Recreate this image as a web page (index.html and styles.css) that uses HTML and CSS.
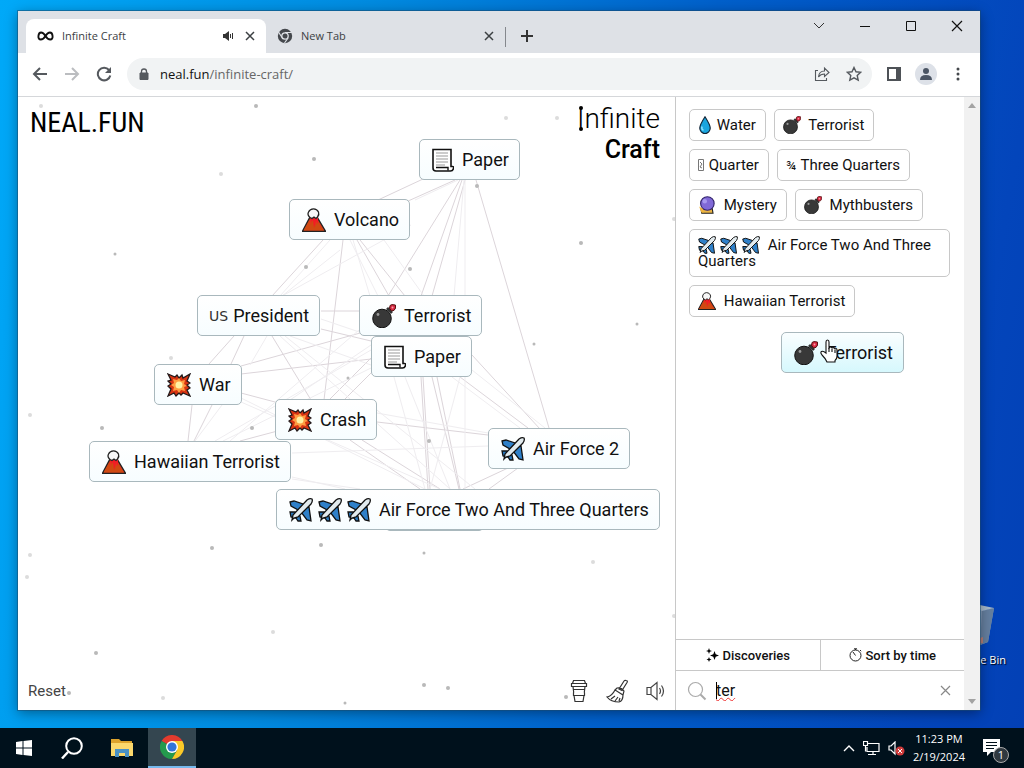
FILE: index.html
```html
<!DOCTYPE html>
<html lang="en">
<head>
<meta charset="utf-8">
<title>Infinite Craft</title>
<link rel="stylesheet" href="styles.css">
</head>
<body>
<svg class="defs" aria-hidden="true">
  <defs>
    <symbol id="paper" viewBox="0 0 22 24"><path d="M1 1.500h18v17h1.500q1.500 0 1 2-.6 2.500-3 2.500H4q-3 0-3-3z" fill="#fff" stroke="#111" stroke-width="1.600"/><path d="M4 5h12M4 8h12M4 11h12M4 14h12M4 17h9" stroke="#999"/><path d="M4 19.500h12v3" fill="none" stroke="#111" stroke-width="1.400"/></symbol>
    <symbol id="volcano" viewBox="0 0 24 24"><path d="M8 9h7l8.500 14.200H.5z" fill="#e0391b" stroke="#222" stroke-width="1.400"/><path d="M1.500 22.500L7 13l2 4 2-6 2 8 3-6 2 5 4 4.500z" fill="#d04a12"/><path d="M8 9l1 5 2-2 1 8 2-7 2 3V9z" fill="#f31b25"/><path d="M8 9.500Q5 7 6.500 4 8 .8 11.500.8T16.500 4Q17.500 6.500 15.500 9L14 10.500 12 9l-2 1.500z" fill="#f7f7f7" stroke="#222" stroke-width="1.300"/></symbol>
    <symbol id="bomb" viewBox="0 0 24 24"><path d="M16 7l3-3 3-2" fill="none" stroke="#222" stroke-width="3"/><circle cx="10" cy="14.500" r="9.300" fill="#383838" stroke="#111"/><path d="M14 5l5 5 2-2-5-5z" fill="#333"/><path d="M18 1.500l2-.9 3.400.4.2 3-1.600 2.400-2.500.5-1.800-2.400z" fill="#d92843" stroke="#511" stroke-width="1"/><circle cx="20.500" cy="3.500" r="1" fill="#f8a0a8"/><circle cx="6" cy="10.500" r="1.400" fill="#999"/></symbol>
    <symbol id="boom" viewBox="0 0 24 24"><path d="M1 1l7 3 2-2 2 3 3-3 1 3 7-4-3 7 3 2-3 2 3 3-3 2 3 6-7-3-2 2-2-2-3 3-2-3-6 3 3-7-3-3 3-2-3-3 3-1z" fill="#d93412" stroke="#21191a" stroke-width="1.300"/><path d="M6 6l4 1 2-2 2 3 4-1-1 4 3 2-3 1 1 4-4-1-2 3-2-3-4 1 1-4-3-2 3-2z" fill="#ff9e42"/><circle cx="12" cy="12" r="3.500" fill="#fff2a4"/></symbol>
    <symbol id="plane" viewBox="0 0 24 24"><path d="M1 4l4-1 9 3 1 4-4 3L2 8z" fill="#2f80c9" stroke="#111" stroke-width="1.300"/><path d="M15 10l5-1 2 14-4-1-6-8z" fill="#2f80c9" stroke="#111" stroke-width="1.300"/><path d="M1 14l5 0 5 4 1 5-3 0-2-3-5-1z" fill="#2979bf" stroke="#111" stroke-width="1.300"/><path d="M5 20L3 22l1-5L18 2q3-2 5-1 1 2-1 5L9 19z" fill="#e2ebef" stroke="#111" stroke-width="1.300"/></symbol>
    <symbol id="drop" viewBox="0 0 16 24"><path d="M8 1q7 11 7 15a7 7.500 0 0 1-14 0Q1 12 8 1z" fill="#19a5df" stroke="#123" stroke-width="1.500"/><path d="M4 14q-1 4 2 5" stroke="#8de2ff" fill="none" stroke-width="2"/></symbol>
    <symbol id="orb" viewBox="0 0 24 24"><path d="M4 17h15l1 6H5z" fill="#eab545" stroke="#222" stroke-width="1.500"/><circle cx="12.500" cy="10" r="9" fill="#8069d6" stroke="#30226b" stroke-width="1.500"/><path d="M1.500 14l5 3 1 5-3 0z" fill="#f2b53c"/><circle cx="9" cy="7" r="3" fill="#a798ee"/></symbol>
    <symbol id="tofu" viewBox="0 0 6 12"><path d="M.5.500h5v11h-5zM2 3l2 2-2 3 2 1" fill="none" stroke="#777"/></symbol>
    <symbol id="x" viewBox="0 0 10 10"><path d="M1 1l8 8M9 1L1 9" fill="none" stroke="currentColor" stroke-width="1.500"/></symbol>
  </defs>
</svg>

<div class="desktop">
  <div class="bin">
    <svg width="46" height="44" viewBox="0 0 46 44"><path d="M4 1l28 6 12-3-6 34-13 5L6 38z" fill="#8299b7"/><path d="M32 7l12-3-6 34-8 3z" fill="#657f9f"/><path d="M4 1l28 6 12-3L25 0z" fill="#a9bac9"/><path d="M27 35l6-2v6l-6 1z" fill="#b57e75"/></svg>
    <span>Recycle Bin</span>
  </div>

  <main class="window">
    <header class="tabs">
      <div class="tab active">
        <svg class="loop" width="17" height="12" viewBox="0 0 18 12"><path d="M9 6C6 1 2 1 1.500 6S6 11 9 6s7-5 7.500 0S12 11 9 6z" fill="none" stroke="#111" stroke-width="2"/></svg>
        <span class="tab-title">Infinite Craft</span>
        <svg width="12" height="12" viewBox="0 0 12 12"><path d="M1 4h2l4-3v10L3 8H1z" fill="#333"/><path d="M8.500 4v4M10.500 3v6" stroke="#333"/></svg>
        <button class="icon-button" aria-label="Close Infinite Craft"><svg width="10" height="10"><use href="#x"/></svg></button>
      </div>
      <div class="tab">
        <svg width="16" height="16" viewBox="0 0 16 16"><circle cx="8" cy="8" r="7.200" fill="#45484d"/><circle cx="8" cy="8" r="3.200" fill="#45484d" stroke="#dee1e6" stroke-width="1.300"/><path d="M8 4.500h7M5 9.500L1.500 4M11 10l-3.500 5" stroke="#dee1e6" stroke-width="1.200"/></svg>
        <span class="tab-title">New Tab</span>
        <button class="icon-button" aria-label="Close New Tab"><svg width="10" height="10"><use href="#x"/></svg></button>
      </div>
      <button class="icon-button new-tab" aria-label="New tab"><svg width="12" height="12" viewBox="0 0 12 12"><path d="M6 0v12M0 6h12" stroke="#333" stroke-width="2"/></svg></button>
      <div class="controls">
        <button class="icon-button" aria-label="Search tabs"><svg width="12" height="12" viewBox="0 0 12 12"><path d="M1 3l5 5 5-5" fill="none" stroke="#333"/></svg></button>
        <button class="icon-button" aria-label="Minimize"><svg width="12" height="12" viewBox="0 0 12 12"><path d="M1 6.500h10" stroke="#111"/></svg></button>
        <button class="icon-button" aria-label="Maximize"><svg width="12" height="12" viewBox="0 0 12 12"><path d="M1.500 1.500h9v9h-9z" fill="none" stroke="#111"/></svg></button>
        <button class="icon-button" aria-label="Close"><svg width="12" height="12" viewBox="0 0 12 12"><path d="M1 1l10 10M11 1L1 11" stroke="#111" stroke-width="1.200"/></svg></button>
      </div>
    </header>

    <nav class="toolbar">
      <button class="icon-button" aria-label="Back"><svg width="16" height="16" viewBox="0 0 16 16"><path d="M15 8H2M8 2L2 8l6 6" fill="none" stroke="#55595e" stroke-width="2"/></svg></button>
      <button class="icon-button" aria-label="Forward"><svg width="16" height="16" viewBox="0 0 16 16"><path d="M1 8h13M8 2l6 6-6 6" fill="none" stroke="#bbbdc0" stroke-width="2"/></svg></button>
      <button class="icon-button" aria-label="Reload"><svg width="16" height="16" viewBox="0 0 16 16"><path d="M13 4a6.300 6.300 0 1 0 1.300 5.500" fill="none" stroke="#55595e" stroke-width="2"/><path d="M15 1v6H9z" fill="#55595e"/></svg></button>
      <div class="address">
        <svg width="10" height="12" viewBox="0 0 10 12"><path d="M1 5h8v6.500H1z" fill="#55595e" stroke="#55595e"/><path d="M2.500 5V3.500a2.500 2.500 0 0 1 5 0V5" fill="none" stroke="#55595e" stroke-width="1.300"/></svg>
        <span class="url">neal.fun<em>/infinite-craft/</em></span>
        <button class="icon-button" aria-label="Share"><svg width="16" height="16" viewBox="0 0 16 16"><path d="M4 4.500H1.500v10h11V12M4.500 11q.5-6 6-6V2l4.500 4.500-4.500 4V8Q6.500 8 4.500 11z" fill="none" stroke="#55595e" stroke-width="1.100"/></svg></button>
        <button class="icon-button" aria-label="Bookmark"><svg width="16" height="16" viewBox="0 0 16 16"><path d="M8 1.500l2 4.300 4.700.5-3.500 3.200 1 4.700L8 11.800l-4.200 2.400 1-4.700L1.300 6.300 6 5.800z" fill="none" stroke="#55595e" stroke-width="1.400"/></svg></button>
      </div>
      <button class="icon-button" aria-label="Side panel"><svg width="14" height="14" viewBox="0 0 14 14"><path d="M1 1h12v12H1z" fill="none" stroke="#4e5257" stroke-width="2"/><path d="M9 1h4v12H9z" fill="#4e5257"/></svg></button>
      <button class="icon-button profile" aria-label="Profile"><svg width="12" height="12" viewBox="0 0 12 12"><circle cx="6" cy="3" r="3" fill="#4b5564"/><path d="M0 12q0-5 6-5t6 5z" fill="#4b5564"/></svg></button>
      <button class="icon-button" aria-label="Menu"><svg width="4" height="14" viewBox="0 0 4 14" fill="#44484c"><circle cx="2" cy="2" r="1.500"/><circle cx="2" cy="7" r="1.500"/><circle cx="2" cy="12" r="1.500"/></svg></button>
    </nav>

    <section class="page">
      <div class="canvas">
        <svg class="links" aria-hidden="true"><g transform="translate(-18 -97)">
          <g stroke="#dcd5da" fill="none">
            <path d="M423 179L378 200M455 180L388 210M462 180L421 296M465 180L432 296M460 180L388 296M476 180L549 428"/>
            <path d="M323 240L272 296M357 240L389 296M360 240L405 296M343 240L324 400M321 311H359M321 329L371 341M234 336L209 364M244 336L231 364M272 336L311 400M241 366L371 330M241 374L371 359M241 393L275 402M192 405L188 441M212 405L194 441M240 441L300 425"/>
            <path d="M371 358L330 399M371 373L345 399M421 377L428 489M423 377L430 489M432 377L459 489M437 377L460 489M472 355L540 429M460 377L528 428M377 422L488 435M350 440L420 489M362 440L440 489M508 468L463 489M518 468L489 489"/>
          </g>
          <g stroke="#efedf0" fill="none">
            <path d="M464 180L454 296M465 180V296M458 180L415 200M330 240L280 296M353 240L370 296M350 240L378 296M340 250L282 296M411 225L282 296M384 240L424 296"/>
            <path d="M280 336L450 489M285 336L475 489M267 336L250 365M290 336L371 365M321 319L371 336M241 402L440 489M239 397L425 489M222 405L195 441M215 441L371 350M223 441L371 368M292 453L488 446M292 477L345 489M292 479L360 489M394 377L425 489M405 377L450 489M465 377V489M460 377L430 489M472 370L545 428M452 377L520 428M377 413L488 433M371 345L290 400M359 330L230 441"/>
          </g>
          <g fill="#b9b9b9">
            <circle cx="256" cy="106" r="2"/><circle cx="314" cy="159" r="2"/><circle cx="115" cy="254" r="1.500"/><circle cx="306" cy="267" r="2"/><circle cx="410" cy="269" r="2"/><circle cx="477" cy="186" r="2"/><circle cx="581" cy="243" r="2"/><circle cx="637" cy="324" r="1.500"/><circle cx="534" cy="344" r="1.500"/><circle cx="348" cy="378" r="1.500"/><circle cx="102" cy="428" r="2"/><circle cx="252" cy="428" r="2"/><circle cx="429" cy="441" r="2"/><circle cx="424" cy="553" r="1.500"/><circle cx="321" cy="545" r="2"/><circle cx="212" cy="548" r="2"/><circle cx="96" cy="653" r="2"/><circle cx="69" cy="693" r="2"/><circle cx="424" cy="685" r="2"/><circle cx="448" cy="688" r="2"/><circle cx="345" cy="703" r="1.500"/><circle cx="566" cy="697" r="2"/>
          </g>
          <g fill="#dcdcdc">
            <circle cx="41" cy="106" r="2"/><circle cx="221" cy="174" r="2"/><circle cx="506" cy="118" r="2"/><circle cx="557" cy="118" r="2"/><circle cx="171" cy="358" r="2"/><circle cx="30" cy="415" r="2"/><circle cx="30" cy="555" r="2"/><circle cx="27" cy="577" r="2"/><circle cx="273" cy="632" r="2"/><circle cx="163" cy="698" r="2"/><circle cx="593" cy="562" r="2"/><circle cx="674" cy="219" r="2"/><circle cx="674" cy="616" r="2"/>
          </g>
        </g></svg>

        <div class="brand">
          <a class="logo" href="#">NEAL.FUN</a>
          <h1 class="game"><span class="thin"><span class="tall">I</span>nfinite</span><span class="bold">Craft</span></h1>
        </div>

        <div class="node n-paper"><svg class="sheet"><use href="#paper"/></svg>Paper</div>
        <div class="node n-volcano"><svg><use href="#volcano"/></svg>Volcano</div>
        <div class="node n-president"><span class="flag">US</span>President</div>
        <div class="node n-terrorist"><svg><use href="#bomb"/></svg>Terrorist</div>
        <div class="node n-paper2"><svg class="sheet"><use href="#paper"/></svg>Paper</div>
        <div class="node n-war"><svg><use href="#boom"/></svg>War</div>
        <div class="node n-hawaiian"><svg><use href="#volcano"/></svg>Hawaiian Terrorist</div>
        <div class="node n-crash"><svg><use href="#boom"/></svg>Crash</div>
        <div class="node n-airforce"><svg><use href="#plane"/></svg>Air Force 2</div>
        <div class="node n-under"></div>
        <div class="node n-quarters"><span class="trio"><svg><use href="#plane"/></svg><svg><use href="#plane"/></svg><svg><use href="#plane"/></svg></span>Air Force Two And Three Quarters</div>

        <footer class="tools">
          <button class="reset">Reset</button>
          <button class="icon-button" aria-label="Buy a coffee"><svg width="18" height="24" viewBox="0 0 18 24"><path d="M3.500 1.500h11l1 3h-13zM1.500 4.500h15v3h-15zM3 7.500l.7 6M15 7.500l-.7 6M3 10.500h12M3.500 16.500h11M4 16.500l1 6h8l1-6M3.500 13.500v3h11v-3" fill="none" stroke="#333" stroke-width="1.200"/></svg></button>
          <button class="icon-button" aria-label="Clear"><svg width="22" height="24" viewBox="0 0 22 24"><path d="M20 1.500q2 0 1 2l-5 8-3-1.500 5-8q.8-1 2-.5zM11 9q4-1 7 3l-1 4-8-5zM9 11Q6 17 1 18q4 5 12 5 4-1 4-7M5 20l4-3M9 22l3-4M13 22l1-3" fill="none" stroke="#333" stroke-width="1.200"/></svg></button>
          <button class="icon-button" aria-label="Sound"><svg width="20" height="20" viewBox="0 0 20 20"><path d="M1 6.500h4l6-5v17l-6-5H1zM5 6.500v7M13.500 7q2 3 0 6M15.500 4.500q4 5.500 0 11" fill="none" stroke="#444" stroke-width="1.200"/></svg></button>
        </footer>
      </div>

      <aside class="sidebar">
        <div class="items">
          <button class="item"><svg class="slim"><use href="#drop"/></svg> Water</button>
          <button class="item"><svg><use href="#bomb"/></svg> Terrorist</button>
          <button class="item"><svg class="tofu"><use href="#tofu"/></svg> Quarter</button>
          <button class="item"><span class="fraction">¾</span> Three Quarters</button>
          <button class="item"><svg><use href="#orb"/></svg> Mystery</button>
          <button class="item"><svg><use href="#bomb"/></svg> Mythbusters</button>
          <button class="item"><svg><use href="#plane"/></svg><svg><use href="#plane"/></svg><svg><use href="#plane"/></svg> Air Force Two And Three Quarters</button>
          <button class="item"><svg><use href="#volcano"/></svg> Hawaiian Terrorist</button>
        </div>
        <div class="sort">
          <button><svg width="13" height="14" viewBox="0 0 13 14"><path d="M8.500 3l1.200 3.300L13 7.500 9.700 8.700 8.500 12 7.300 8.700 4 7.500l3.300-1.200zM3 0l.8 2.200L6 3l-2.200.8L3 6l-.8-2.200L0 3l2.200-.8zM3 9l.7 1.800L5.500 11.500l-1.800.7L3 14l-.7-1.800L.5 11.500l1.800-.7z"/></svg>Discoveries</button>
          <button><svg width="13" height="14" viewBox="0 0 13 14"><circle cx="6.500" cy="7.500" r="5.500" fill="none" stroke="#222"/><path d="M6.500 7.500L4 4M5 .8h3M6.500 1v1M11 2l1.200 1.200" stroke="#222" fill="none"/></svg>Sort by time</button>
        </div>
        <div class="search">
          <svg width="20" height="20" viewBox="0 0 20 20"><circle cx="8.500" cy="8.500" r="7" fill="none" stroke="#aaa" stroke-width="1.200"/><path d="M13.500 13.500l5 5" stroke="#aaa" stroke-width="2"/></svg>
          <div class="field"><input type="text" aria-label="Search items" value="ter"></div>
          <button class="icon-button" aria-label="Clear search"><svg width="11" height="11" viewBox="0 0 11 11"><path d="M1 1l9 9M10 1l-9 9" stroke="#888" stroke-width="1.200"/></svg></button>
        </div>
      </aside>
      <div class="scroll">
        <svg width="8" height="5" viewBox="0 0 8 5"><path d="M4 0l4 5H0z" fill="#a3a3a3"/></svg>
        <svg width="8" height="5" viewBox="0 0 8 5"><path d="M0 0h8L4 5z" fill="#a3a3a3"/></svg>
      </div>

      <div class="node dragged"><svg><use href="#bomb"/></svg>Terrorist
        <svg class="pointer" viewBox="0 0 18 24"><path d="M6 14V3q0-2 1.500-2T9 3v6q2-2 3 0 2-1 3 1 2-1 2 1v6q0 3-2 4.500V23H7q-1-3-5-7-2-2.500-.5-3.500T6 14z" fill="#fff" stroke="#111" stroke-width="1.100"/><path d="M9 9v4M12 10v3M15 11v3" stroke="#111" stroke-width="1.100"/></svg>
      </div>
    </section>
  </main>

  <footer class="taskbar">
    <button class="task" aria-label="Start"><svg width="16" height="16" viewBox="0 0 16 16"><path d="M0 2l6.500-1v6.500H0zM7.500 1L16 0v7.500H7.500zM0 8.500h6.500V15L0 14zM7.500 8.500H16V16l-8.500-1z" fill="#fff"/></svg></button>
    <button class="task" aria-label="Search"><svg width="22" height="22" viewBox="0 0 22 22"><circle cx="13" cy="9" r="7.800" fill="none" stroke="#fff" stroke-width="2"/><path d="M7 15l-6 6.500" stroke="#fff" stroke-width="2.400"/></svg></button>
    <button class="task" aria-label="File Explorer"><svg width="22" height="18" viewBox="0 0 22 18"><path d="M0 0h8l2 2h11v15H0z" fill="#dda32c"/><path d="M0 4h22v13H0z" fill="#fbd86c"/><path d="M4 10h14v8h-4v-4H8v4H4z" fill="#4a91c4"/></svg></button>
    <button class="task current" aria-label="Chrome"><svg width="24" height="24" viewBox="0 0 24 24"><path d="M12 12L1.600 6a12 12 0 0 1 20.800 0z" fill="#e33b2e"/><path d="M12 12L1.600 6A12 12 0 0 0 12 24l5-9z" fill="#249a4d"/><path d="M12 6h10.400A12 12 0 0 1 12 24l5.200-9z" fill="#fbc928"/><circle cx="12" cy="12" r="6" fill="#fff"/><circle cx="12" cy="12" r="4.600" fill="#3275d8"/></svg></button>
    <div class="tray">
      <svg width="12" height="8" viewBox="0 0 12 8"><path d="M1 7l5-5 5 5" fill="none" stroke="#fff" stroke-width="1.400"/></svg>
      <svg width="17" height="15" viewBox="0 0 17 15"><path d="M5 2.500h11v8H4V6M10 10.500v3M5 13.500h8M.5.500h4v4h-4zM2.500 4.500v6" fill="none" stroke="#fff" stroke-width="1.200"/></svg>
      <svg width="17" height="15" viewBox="0 0 17 15"><path d="M1 5h2l4-4v12L3 9H1z" fill="none" stroke="#fff" stroke-width="1.200"/><circle cx="12" cy="10" r="4.500" fill="#cf3b3b"/><path d="M10 8l4 4M14 8l-4 4" stroke="#fff"/></svg>
      <div class="clock"><span>11:23 PM</span><span>2/19/2024</span></div>
      <button class="icon-button notices" aria-label="Notifications"><svg width="17" height="18" viewBox="0 0 17 18"><path d="M0 0h17v13H8l-4 4v-4H0z" fill="#fff"/><path d="M3 3.500h11M3 6.500h11M3 9.500h8" stroke="#00101a"/></svg><span class="badge">1</span></button>
    </div>
  </footer>
</div>
</body>
</html>
```
FILE: styles.css
```css
* { box-sizing: border-box; }
html, body { height: 100%; margin: 0; }
body { font-family: Roboto, "Liberation Sans", sans-serif; color: #111; overflow: hidden; }
button, input { font: inherit; color: inherit; }
button { border: 0; background: none; padding: 0; }
svg { display: block; flex: none; }
.defs { position: absolute; width: 0; height: 0; }
.icon-button { display: flex; align-items: center; justify-content: center; flex: none; }

.desktop {
  position: relative;
  display: flex;
  flex-direction: column;
  height: 100vh;
  background: linear-gradient(100deg, #00a9f8 0%, #008be0 32%, #0060cb 62%, #0345bb 90%, #0340b5 100%);
}
.bin {
  position: absolute;
  right: 14px;
  bottom: 100px;
  display: flex;
  flex-direction: column;
  align-items: flex-end;
  gap: 4px;
  padding-right: 4px;
  font: 11px/16px "Open Sans", sans-serif;
  color: #fff;
  text-shadow: 1px 1px 1px #000;
}
.bin svg { margin-right: 10px; }

.window {
  position: relative;
  flex: 1;
  min-height: 0;
  display: flex;
  flex-direction: column;
  margin: 11px 44px 18px 18px;
  background: #fff;
  box-shadow: 0 0 0 1px #1c4a6b80, 0 3px 12px #0006;
}
.tabs {
  display: flex;
  align-items: stretch;
  height: 42px;
  padding: 8px 0 0 8px;
  background: #dee1e6;
  font: 11px/16px "Open Sans", sans-serif;
  color: #3c4043;
}
.tab {
  display: flex;
  align-items: center;
  gap: 8px;
  width: 239px;
  padding: 0 11px;
}
.tab.active { width: 240px; background: #fff; border-radius: 8px 8px 0 0; }
.tab-title { flex: 1; }
.tab .icon-button { width: 10px; margin-left: 3px; }
.new-tab { width: 44px; position: relative; }
.new-tab::before { content: ""; position: absolute; left: 0; top: 8px; height: 20px; border-left: 1px solid #85888d; }
.controls { display: flex; align-items: flex-start; margin-left: auto; }
.controls .icon-button { width: 46px; height: 13px; }

.toolbar {
  display: flex;
  align-items: center;
  gap: 16px;
  height: 44px;
  padding: 0 20px 2px 14px;
  border-bottom: 1px solid #d5d7da;
}
.address {
  flex: 1;
  display: flex;
  align-items: center;
  gap: 16px;
  height: 32px;
  margin: 0 -1px;
  padding: 0 10px 0 12px;
  border-radius: 16px;
  background: #f1f3f4;
  font: 13px/20px "Open Sans", sans-serif;
}
.address > svg { margin-right: -5px; }
.url { flex: 1; }
.url em { font-style: normal; color: #666; }
.profile { width: 22px; height: 22px; margin: 0 3px 0 -2px; border-radius: 50%; background: #dde1e8; }

.page { position: relative; flex: 1; min-height: 0; display: flex; }
.canvas { position: relative; flex: 1; display: flex; flex-direction: column; justify-content: space-between; }
.links { position: absolute; inset: 0; width: 100%; height: 100%; }
.brand { position: relative; display: flex; justify-content: space-between; padding: 6px 15px 0 12px; }
.logo { font-family: "Roboto Condensed", "Liberation Sans Narrow", Roboto, sans-serif; font-size: 28px; line-height: 40px; color: #000; text-decoration: none; }
.game { display: flex; flex-direction: column; align-items: flex-end; margin: 0; color: #000; }
.thin { font-size: 28px; font-weight: 300; line-height: 32px; }
.bold { font-size: 25px; font-weight: 500; line-height: 30px; }
.tall { position: relative; }
.tall::before, .tall::after { content: ""; position: absolute; left: 2px; width: 4px; height: 4px; border-radius: 50%; background: #000; }
.tall::before { top: 4px; }
.tall::after { bottom: 4px; }

.node {
  position: absolute;
  display: flex;
  align-items: center;
  gap: 8px;
  height: 41px;
  padding: 0 10px 0 12px;
  border: 1px solid #a9b8bd;
  border-radius: 5px;
  background: linear-gradient(#fff, #f7fdff);
  font-size: 18px;
  line-height: 24px;
  white-space: nowrap;
}
.node svg { width: 24px; height: 24px; }
.node svg.sheet { width: 22px; }
.trio { display: flex; gap: 5px; }
.flag { font: 14px/24px "DejaVu Sans", sans-serif; color: #333; }
.n-paper { left: 401px; top: 42px; }
.n-volcano { left: 271px; top: 102px; }
.n-president { left: 179px; top: 198px; gap: 5px; padding-left: 11px; }
.n-terrorist { left: 341px; top: 198px; }
.n-paper2 { left: 353px; top: 239px; }
.n-war { left: 136px; top: 267px; }
.n-hawaiian { left: 71px; top: 344px; }
.n-crash { left: 257px; top: 302px; }
.n-airforce { left: 470px; top: 331px; }
.n-under { left: 367px; top: 393px; width: 99px; }
.n-quarters { left: 258px; top: 392px; }
.dragged { right: 76px; top: 235px; background: linear-gradient(#fafeff, #d6f8fd); }
.node .pointer { position: absolute; left: 38px; top: 6px; width: 18px; height: 24px; }

.tools { position: relative; display: flex; align-items: center; gap: 18px; height: 38px; padding: 0 9px 0 10px; }
.reset { margin-right: auto; font-size: 15px; color: #444; }

.sidebar { width: 289px; display: flex; flex-direction: column; border-left: 1px solid #c8c8c8; }
.items { flex: 1; display: flex; flex-wrap: wrap; align-content: flex-start; gap: 8px; padding: 12px 14px 12px 13px; }
.item {
  padding: 7px 9px 7px 8px;
  border: 1px solid #c8c8c8;
  border-radius: 5px;
  background: #fff;
  font-size: 15px;
  line-height: 16px;
  text-align: left;
}
.item svg { display: inline-block; width: 18px; height: 18px; margin: -4px 4px -2px 0; vertical-align: middle; }
.item svg.slim { width: 14px; margin-right: 1px; }
.item svg.tofu { width: 6px; height: 12px; margin: -2px 1px 0 0; }
.fraction { margin-right: 1px; font-size: 13px; line-height: 1; }
.sort { display: flex; border-top: 1px solid #c8c8c8; border-bottom: 1px solid #c8c8c8; height: 32px; }
.sort button { flex: 1; display: flex; align-items: center; justify-content: center; gap: 4px; font-size: 13px; font-weight: 500; }
.sort button + button { border-left: 1px solid #c8c8c8; }
.search { display: flex; align-items: center; gap: 9px; height: 39px; padding: 0 13px 0 11px; }
.field { position: relative; flex: 1; }
.field::before { content: ""; position: absolute; left: 0; top: 1px; height: 17px; border-left: 1px solid #000; }
.field input { display: block; width: 100%; border: 0; outline: 0; padding: 0; background: none; font-size: 16px; line-height: 20px; text-decoration: underline wavy #e33 1px; }
.scroll { width: 16px; display: flex; flex-direction: column; align-items: center; justify-content: space-between; padding: 6px 0; background: #f1f1f1; }

.taskbar { flex: none; display: flex; height: 40px; background: #00111c; color: #fff; font-family: "Open Sans", sans-serif; }
.task { width: 48px; display: flex; align-items: center; justify-content: center; margin-right: 2px; }
.task:first-child { margin-right: 0; }
.current { background: #344650; border-bottom: 2px solid #76b9ed; }
.tray { display: flex; align-items: center; gap: 8px; margin-left: auto; padding-right: 15px; }
.clock { display: flex; flex-direction: column; text-align: center; font-size: 11px; line-height: 18px; }
.notices { position: relative; width: 36px; }
.badge { position: absolute; right: 0; bottom: -6px; width: 16px; height: 16px; border: 1px solid #aaa; border-radius: 50%; background: #303940; font-size: 11px; line-height: 14px; }
```
